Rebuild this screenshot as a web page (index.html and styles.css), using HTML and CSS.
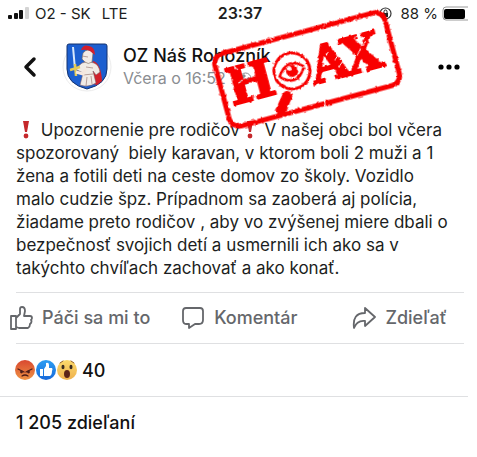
FILE: index.html
```
<!DOCTYPE html>
<html lang="sk">

<head>
    <meta charset="UTF-8">
    <meta name="viewport" content="width=device-width, initial-scale=1.0">
    <title>OZ Náš Rohožník</title>
    <link rel="stylesheet" href="styles.css">
</head>

<body>
    <div class="screen">
        <div class="status">
            <div class="carrier">
                <svg class="signal" width="22" height="14" viewBox="0 0 22 14">
                    <rect x="0" y="9" width="4" height="4" rx="1" fill="#111" />
                    <rect x="6" y="7" width="4" height="6" rx="1" fill="#111" />
                    <rect x="11" y="4" width="4" height="9" rx="1" fill="#111" />
                    <rect x="17" y="1" width="4" height="12" rx="1" fill="#d4d4d4" />
                </svg>
                <span>O2 - SK</span>
                <span class="network">LTE</span>
            </div>
            <span class="time">23:37</span>
            <div class="power">
                <svg width="13" height="13" viewBox="0 0 13 13">
                    <circle cx="6.500" cy="6.500" r="5.500" fill="none" stroke="#333" stroke-width="1.200" />
                    <rect x="4" y="6" width="5" height="4" fill="#222" />
                    <path d="M5 6V4.500a1.500 1.500 0 0 1 3 0V6" fill="none" stroke="#222" />
                </svg>
                <span>88 %</span>
                <svg width="26" height="15" viewBox="0 0 26 15">
                    <path d="M26 1H4Q1 1 1 4v7q0 3 3 3h22" fill="none" stroke="#999" />
                    <rect x="2" y="3" width="21" height="10" rx="2" fill="#000" />
                </svg>
            </div>
        </div>

        <div class="head">
            <button class="back" type="button" aria-label="Späť">
                <svg width="14" height="22" viewBox="0 0 14 22">
                    <path d="M11 3 3 11l8 8" fill="none" stroke="#111" stroke-width="3.500" stroke-linecap="round" stroke-linejoin="round" />
                </svg>
            </button>
            <svg class="avatar" width="50" height="50" viewBox="0 0 50 50">
                <circle cx="25" cy="25" r="24" fill="#fff" stroke="#ececec" />
                <path d="M7 2h36q2 0 2 2v23q0 15-20 20Q5 42 5 27V4q0-2 2-2z" fill="#1c5fd0" stroke="#15336e" stroke-width="1" />
                <path d="M31 19q8 2 9 20l-5 4-7-2z" fill="#d2202b" />
                <path d="M20 21q6-3 12 0 5 2 6 9l-4 3-3-4 3 12q-8 5-16 2l3-12-8-4z" fill="#f1ebe6" stroke="#7d5960" stroke-width=".6" />
                <path d="M21 11q5-6 10 0l-1 9q-4 3-7 0l-3-3z" fill="#f3ebe7" stroke="#765" stroke-width=".6" />
                <path d="M19 8q2-6 8-4 6 1 6 9l-5-4q-4-2-9-1z" fill="#d41f2c" />
                <path d="m20 14 6 1M24 25l7 1M21 33l10-1M25 35l-1 9M29 34l1 8" fill="none" stroke="#a88b85" stroke-width=".8" />
                <path d="m11 5 2 22" stroke="#d8e8fb" stroke-width="2" />
                <path d="m8 28 10-3m-5-3 1 12" stroke="#e4cb57" stroke-width="2.500" />
                <path d="m14 30 7 2 3-5" fill="none" stroke="#f5e8df" stroke-width="3" />
            </svg>
            <div class="who">
                <h1 class="name">OZ Náš Rohožník</h1>
                <div class="when">
                    <span>Včera o 16:52 ·</span>
                    <svg width="13" height="13" viewBox="0 0 13 13">
                        <circle cx="6.500" cy="6.500" r="5.500" fill="#fff" stroke="#8a8d91" />
                        <path d="m2 4 3-2 2 2-3 3zM7 7l3-2 1 3-3 3z" fill="#8a8d91" />
                    </svg>
                </div>
            </div>
            <button class="more" type="button" aria-label="Viac">
                <svg width="22" height="6" viewBox="0 0 22 6">
                    <circle cx="3" cy="3" r="2.600" />
                    <circle cx="11" cy="3" r="2.600" />
                    <circle cx="19" cy="3" r="2.600" />
                </svg>
            </button>
        </div>

        <p class="text">
            <svg class="mark" width="20" height="18" viewBox="0 0 20 18">
                <path d="M7 0h6l-2 11H9z" fill="#c5282b" />
                <circle cx="10" cy="15" r="2.400" fill="#c5282b" />
            </svg>
            Upozornenie pre rodičov<svg class="mark" width="20" height="18" viewBox="0 0 20 18">
                <path d="M7 0h6l-2 11H9z" fill="#c5282b" />
                <circle cx="10" cy="15" r="2.400" fill="#c5282b" />
            </svg>
            V našej obci bol včera<br>
            spozorovaný &nbsp;biely karavan, v ktorom boli 2 muži a 1<br>
            žena a fotili deti na ceste domov zo školy. Vozidlo<br>
            malo cudzie špz. Prípadnom sa zaoberá aj polícia,<br>
            žiadame preto rodičov , aby vo zvýšenej miere dbali o<br>
            bezpečnosť svojich detí a usmernili ich ako sa v<br>
            takýchto chvíľach zachovať a ako konať.
        </p>

        <div class="actions">
            <button class="action" type="button">
                <svg width="24" height="24" viewBox="0 0 24 24">
                    <path d="M2 10h5v13H2zM7 12l4-4V3q0-2 2-2 3 0 3 4l-1 5h6q2 0 2 2 0 1-1 2 1 1 0 3l-1 1q0 3-2 4H10l-3-1" />
                </svg>
                Páči sa mi to
            </button>
            <button class="action" type="button">
                <svg width="24" height="24" viewBox="0 0 24 24">
                    <path d="M5 2h14q3 0 3 3v9q0 4-4 4h-4l-6 4v-4H5q-3 0-3-4V5q0-3 3-3z" />
                </svg>
                Komentár
            </button>
            <button class="action" type="button">
                <svg width="24" height="24" viewBox="0 0 24 24">
                    <path d="m13 2 10 9-10 9v-5q-8-1-11 7Q0 7 13 7z" />
                </svg>
                Zdieľať
            </button>
        </div>

        <div class="reactions">
            <svg width="62" height="22" viewBox="0 0 62 22">
                <defs>
                    <linearGradient id="angry" x2="0" y2="1">
                        <stop offset="0" stop-color="#d94830" />
                        <stop offset="1" stop-color="#ef9344" />
                    </linearGradient>
                    <linearGradient id="like" x2="0" y2="1">
                        <stop offset="0" stop-color="#2c9df2" />
                        <stop offset="1" stop-color="#1769da" />
                    </linearGradient>
                    <linearGradient id="wow" x2="0" y2="1">
                        <stop offset="0" stop-color="#fbd96b" />
                        <stop offset="1" stop-color="#efb14f" />
                    </linearGradient>
                </defs>
                <circle cx="10" cy="11" r="10" fill="url(#angry)" />
                <path d="m3 10 6 3m8-3-6 3M7 17q3-2 6 0" fill="none" stroke="#4d1c18" stroke-width="1.300" stroke-linecap="round" />
                <circle cx="6.500" cy="13" r="1.400" fill="#4d1c18" />
                <circle cx="13.500" cy="13" r="1.400" fill="#4d1c18" />
                <circle cx="31" cy="11" r="10" fill="url(#like)" />
                <path d="M25 10h3v7h-3zM29 10l2-3V4q3-1 3 2v3h3q1 1 0 3 0 4-2 5h-6z" fill="#fff" />
                <circle cx="52" cy="11" r="10" fill="url(#wow)" />
                <ellipse cx="48" cy="8" rx="1.500" ry="2.200" fill="#3a2b20" />
                <ellipse cx="56" cy="8" rx="1.500" ry="2.200" fill="#3a2b20" />
                <path d="m45 4 3-2m8 0 3 2" stroke="#93602b" stroke-linecap="round" />
                <ellipse cx="52" cy="15" rx="3" ry="4" fill="#5c2419" />
            </svg>
            <span>40</span>
        </div>

        <div class="shares">1 205 zdieľaní</div>

        <!-- stamp lies over the status bar and the header -->
        <svg class="stamp" width="204" height="132" viewBox="-102 -66 204 132" role="img" aria-label="HOAX">
            <defs>
                <filter id="rough" x="-5%" y="-5%" width="110%" height="110%">
                    <feTurbulence type="fractalNoise" baseFrequency="0.3" numOctaves="2" seed="4" />
                    <feDisplacementMap in="SourceGraphic" scale="3" xChannelSelector="R" yChannelSelector="G" />
                </filter>
                <mask id="worn" maskUnits="userSpaceOnUse" x="-102" y="-66" width="204" height="132">
                    <rect x="-102" y="-66" width="204" height="132" fill="#fff" />
                    <path d="m-70-22 3 5m8 2 5 4m-16 7 5-2m4 12 4-3M22-8l4-4m3 11 6-6m-4 14 5-5m16-18 4-3m2 11 7-4m-13 12 5-6m14 8 5-3M-30-44l4 8M30-42l-3 6M-26 35l3 8M9 35l-2 8" fill="none" stroke="#000" stroke-width="1" />
                </mask>
            </defs>
            <g transform="rotate(-15)" filter="url(#rough)">
                <g mask="url(#worn)">
                    <rect x="-88" y="-37" width="176" height="75" rx="10" fill="none" stroke="#f80505" stroke-width="5" />
                    <text class="letter" x="-58" y="16">H</text>
                    <text class="letter" x="23" y="17">A</text>
                    <text class="letter" x="57" y="17">X</text>
                    <circle cx="-15" cy="-2" r="18" fill="none" stroke="#f80505" stroke-width="3" />
                    <path d="m-26 21-10 12" stroke="#f80505" stroke-width="10" stroke-linecap="round" />
                    <path d="M-29 1Q-16-18-2-3M-28 1Q-14 15-3-2" fill="none" stroke="#f80505" stroke-width="2.500" />
                    <circle cx="-15" cy="-2" r="6" fill="#f80505" />
                    <circle cx="-17" cy="-5" r="2" fill="#fff" />
                </g>
            </g>
        </svg>
    </div>
</body>

</html>
```
FILE: styles.css
```
body {
    margin: 0;
    background-color: #fff;
    color: #1c1e21;
    font-family: Inter, "Liberation Sans", sans-serif;
}

svg {
    flex-shrink: 0;
}

button {
    border: 0;
    padding: 0;
    background: none;
    font-family: inherit;
    cursor: pointer;
}

.screen {
    position: relative;
    padding-right: 9px;
}

.status {
    display: grid;
    grid-template-columns: 1fr auto 1fr;
    align-items: center;
    height: 26px;
    padding-left: 12px;
    font-size: 15px;
}

.carrier,
.power {
    display: flex;
    align-items: center;
}

.carrier {
    gap: 5px;
    margin-left: -4px;
}

.network {
    margin-left: 6px;
}

.time {
    font-size: 16px;
    font-weight: 600;
}

.power {
    justify-content: flex-end;
    gap: 4px;
}

.power span {
    margin-left: 4px;
}

.head {
    display: flex;
    align-items: center;
    height: 82px;
    padding: 0 8px 0 23px;
}

.back,
.more {
    display: flex;
}

.avatar {
    margin: 0 11px 0 25px;
}

.who {
    flex: 1;
}

.name {
    margin: 0;
    color: #111;
    font-size: 18px;
    font-weight: 500;
    line-height: 23px;
}

.when {
    display: flex;
    align-items: center;
    gap: 4px;
    color: #8a8d91;
    font-size: 16px;
    line-height: 23px;
}

.text {
    margin: 0;
    padding: 11px 0 12px 16px;
    font-size: 17px;
    line-height: 23px;
    white-space: nowrap;
}

.mark {
    vertical-align: -3px;
}

.actions {
    display: flex;
    justify-content: space-between;
    margin: 0 4px 0 16px;
    padding: 13px 0;
    border-top: 1px solid #dfe0e2;
    border-bottom: 1px solid #dfe0e2;
}

.action {
    display: flex;
    align-items: center;
    gap: 9px;
    color: #65676b;
    font-size: 18px;
    font-weight: 500;
    line-height: 24px;
}

.action:first-child {
    margin-left: -7px;
}

.action:nth-child(2) {
    margin-right: 24px;
}

.action:last-child {
    margin-right: 17px;
}

.action path {
    fill: none;
    stroke: #65676b;
    stroke-width: 1.8;
    stroke-linejoin: round;
}

.reactions {
    display: flex;
    align-items: center;
    gap: 5px;
    height: 52px;
    padding-left: 15px;
    border-bottom: 1px solid #dfe0e2;
    color: #111;
    font-size: 18px;
    font-weight: 500;
}

.shares {
    padding: 14px 16px;
    color: #111;
    font-size: 18px;
    font-weight: 500;
    line-height: 24px;
}

.stamp {
    position: absolute;
    top: 3px;
    left: 205px;
    pointer-events: none;
}

.letter {
    fill: #f80505;
    stroke: #f80505;
    stroke-width: 2;
    font-family: "DejaVu Serif", serif;
    font-size: 50px;
    font-weight: 700;
    text-anchor: middle;
}
```
